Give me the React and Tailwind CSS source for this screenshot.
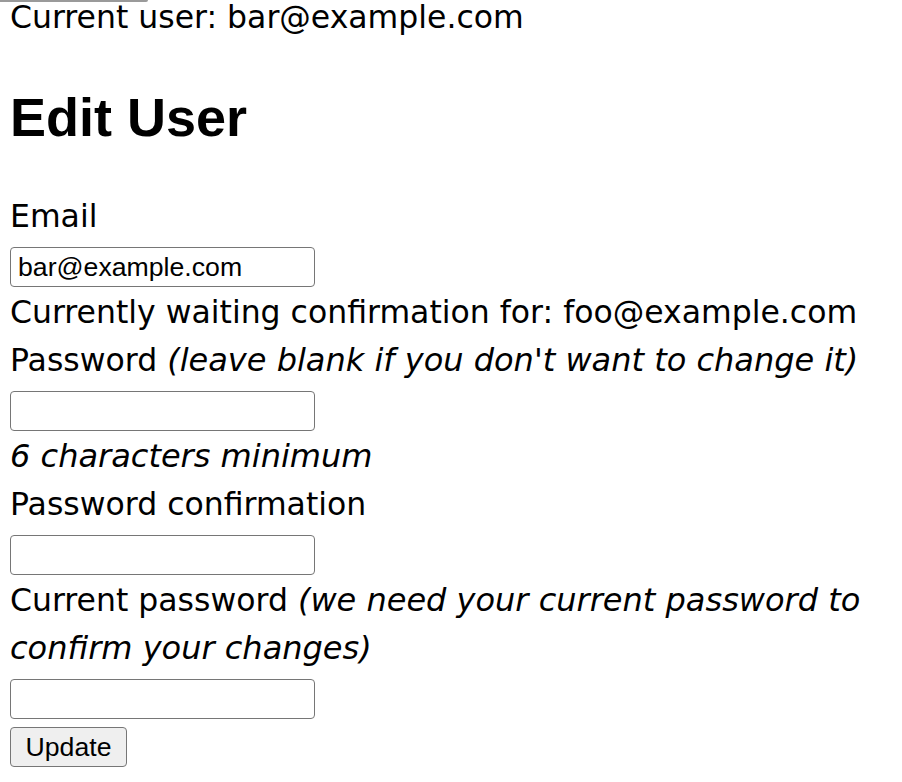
import { useState } from "react";

function Field({ value, onChange }) {
    return (
        <div className="h-12 pt-[7px]">
            <input
                type="text"
                value={value}
                onChange={onChange}
                className="block h-10 w-[305px] rounded-[4px] border border-[#767676] bg-white px-[7px] text-[26.67px] leading-none text-black outline-none [font-family:'Liberation_Sans',Arial,sans-serif]"
            />
        </div>
    );
}

function App() {
    const [email, setEmail] = useState("bar@example.com");
    const [password, setPassword] = useState("");
    const [confirmation, setConfirmation] = useState("");
    const [current, setCurrent] = useState("");

    return (
        <div className="relative min-h-[782px] overflow-hidden bg-white text-black [font-family:'DejaVu_Sans',sans-serif]">
            <div className="absolute left-0 top-0 h-[2px] w-[148px] rounded-br-[3px] bg-[#9a9a9a]" />
            <div className="-mt-[7px] px-[10px] text-[31.5px] leading-[48px]">
                <p>Current user: bar@example.com</p>
                <h1 className="mt-[36px] mb-[34px] text-[54px] font-bold leading-[81px] [font-family:'Liberation_Sans',Arial,sans-serif]">
                    Edit User
                </h1>
                <form onSubmit={(e) => e.preventDefault()}>
                    <p>Email</p>
                    <Field value={email} onChange={(e) => setEmail(e.target.value)} />
                    <p>Currently waiting confirmation for: foo@example.com</p>
                    <p>
                        Password <i className="text-[32px]">(leave blank if you don't want to change it)</i>
                    </p>
                    <Field value={password} onChange={(e) => setPassword(e.target.value)} />
                    <p>
                        <i className="text-[32px]">6 characters minimum</i>
                    </p>
                    <p>Password confirmation</p>
                    <Field value={confirmation} onChange={(e) => setConfirmation(e.target.value)} />
                    <p>
                        Current password{" "}
                        <i className="text-[32px]">(we need your current password to confirm your changes)</i>
                    </p>
                    <Field value={current} onChange={(e) => setCurrent(e.target.value)} />
                    <div className="h-12 pt-[7px]">
                        <button
                            type="submit"
                            className="block h-10 w-[117px] rounded-[4px] border border-[#767676] bg-[#efefef] text-[26.67px] leading-none text-black [font-family:'Liberation_Sans',Arial,sans-serif]"
                        >
                            Update
                        </button>
                    </div>
                </form>
            </div>
        </div>
    );
}

export default App;
